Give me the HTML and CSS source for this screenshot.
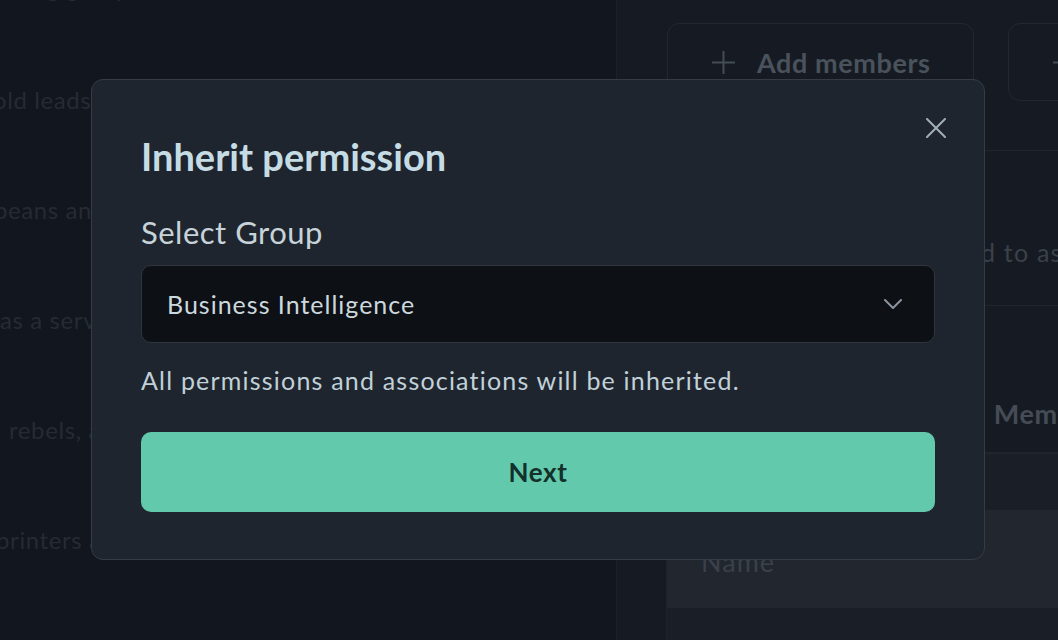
FILE: index.html
```html
<!DOCTYPE html>
<html lang="en">
<head>
<meta charset="utf-8">
<title>Inherit permission</title>
<link rel="stylesheet" href="styles.css">
</head>
<body>
<div class="app">
  <aside class="left-pane">
    <p class="bg-line top">big group of users that share the same access (roles)</p>
    <p class="bg-line l1">old leads on</p>
    <p class="bg-line l2">beans and</p>
    <p class="bg-line l3">as a service</p>
    <p class="bg-line l4">rebels, and</p>
    <p class="bg-line l5">printers and</p>
  </aside>
  <main class="right-pane">
    <div class="toolbar">
      <button class="ghost-btn wide">
        <svg class="plus" width="23" height="23" viewBox="0 0 23 23" fill="none" stroke="currentColor" stroke-width="2"><path d="M11.5 0V23M0 11.5H23"/></svg>
        Add members
      </button>
      <button class="ghost-btn">
        <svg class="plus" width="23" height="23" viewBox="0 0 23 23" fill="none" stroke="currentColor" stroke-width="2"><path d="M11.5 0V23M0 11.5H23"/></svg>
        Add roles
      </button>
    </div>
    <section class="panel">
      <div class="panel-row desc">
        <p>All members are granted to associated resources</p>
      </div>
      <div class="panel-row tabs">
        <span class="tab">Permissions</span>
        <span class="tab">Members</span>
      </div>
      <div class="table-head"></div>
      <div class="table-row"><span>Name</span></div>
      <div class="table-rest"></div>
    </section>
  </main>
</div>

<div class="overlay">
  <div class="modal" role="dialog" aria-labelledby="modal-title">
    <button class="close" aria-label="Close">
      <svg width="20" height="20" viewBox="0 0 20 20" fill="none" stroke="currentColor" stroke-width="2" stroke-linecap="round"><path d="M1 1L19 19M19 1L1 19"/></svg>
    </button>
    <h2 id="modal-title" class="modal-title">Inherit permission</h2>
    <label class="field-label" for="group">Select Group</label>
    <div class="select" id="group">
      <span>Business Intelligence</span>
      <svg class="chevron" width="18" height="10" viewBox="0 0 18 10" fill="none" stroke="currentColor" stroke-width="2" stroke-linecap="round" stroke-linejoin="round"><path d="M1 1L9 9L17 1"/></svg>
    </div>
    <p class="helper">All permissions and associations will be inherited.</p>
    <button class="primary">Next</button>
  </div>
</div>
</body>
</html>
```

FILE: styles.css
```css
* { box-sizing: border-box; }

html, body {
  margin: 0;
  padding: 0;
  width: 1058px;
  height: 640px;
  overflow: hidden;
  background: #12161e;
  font-family: "Lato", "Noto Sans", sans-serif;
}

.app {
  display: flex;
  height: 640px;
}

.left-pane {
  width: 617px;
  flex: none;
  border-right: 1px solid #1d222a;
  background: #12161e;
  overflow: hidden;
  display: flex;
  flex-direction: column;
}

.bg-line {
  margin: 0;
  height: 110px;
  line-height: 110px;
  font-size: 24px;
  letter-spacing: 0.6px;
  color: #262b33;
  white-space: nowrap;
  flex: none;
}
.bg-line.top { height: 57px; line-height: 0; margin-top: -12px; padding-left: 26px; }
.bg-line.l1 { text-indent: -7px; }
.bg-line.l2 { text-indent: -6px; }
.bg-line.l3 { text-indent: 0; }
.bg-line.l4 { text-indent: 9px; }
.bg-line.l5 { text-indent: -4px; }

.right-pane {
  flex: 1;
  background: #161b23;
  padding: 23px 0 0 50px;
  overflow: hidden;
  display: flex;
  flex-direction: column;
}

.toolbar {
  display: flex;
  gap: 34px;
  flex: none;
}

.ghost-btn {
  height: 78px;
  flex: none;
  display: flex;
  align-items: center;
  gap: 22px;
  padding: 0 40px 0 44px;
  background: transparent;
  border: 1px solid #222830;
  border-radius: 12px;
  color: #4a525c;
  font-family: inherit;
  font-size: 27px;
  letter-spacing: 0.6px;
  font-weight: 700;
  white-space: nowrap;
}
.ghost-btn.wide { width: 307px; }
.plus { flex: none; color: #444c56; }

.panel {
  margin-top: 49px;
  flex: 1;
  display: flex;
  flex-direction: column;
  border-left: 1px solid #1e232b;
  margin-left: -1px;
}

.panel-row {
  border-top: 1px solid #20252d;
  display: flex;
  padding-left: 34px;
  white-space: nowrap;
  flex: none;
}
.panel-row p { margin: 0; }

.desc {
  height: 155px;
  align-items: flex-end;
  padding-bottom: 38px;
  font-size: 25px;
  letter-spacing: 1.2px;
  color: #3b4149;
}

.tabs {
  height: 147px;
  align-items: flex-end;
  padding-bottom: 22px;
  gap: 143px;
  font-size: 27px;
  letter-spacing: 0.6px;
  font-weight: 700;
  color: #454c55;
}

.table-head {
  border-top: 2px solid #20252d;
  height: 58px;
  background: #1a1f27;
  flex: none;
}

.table-row {
  height: 98px;
  background: #21262f;
  display: flex;
  align-items: center;
  padding-left: 34px;
  padding-top: 4px;
  font-size: 27px;
  letter-spacing: 1px;
  color: #3a414a;
  flex: none;
}

.table-rest {
  flex: 1;
  background: #1a1f27;
}

/* Modal */
.overlay {
  position: fixed;
  inset: 0;
}

.modal {
  position: absolute;
  left: 91px;
  top: 79px;
  width: 894px;
  height: 481px;
  background: #1f252e;
  border: 1px solid #353c46;
  border-radius: 12px;
  padding: 53px 49px 0;
  display: flex;
  flex-direction: column;
}

.close {
  position: absolute;
  top: 38px;
  right: 38px;
  width: 20px;
  height: 20px;
  padding: 0;
  border: 0;
  background: none;
  color: #a3aeb6;
  display: flex;
}

.modal-title {
  margin: 0;
  font-size: 38px;
  line-height: 46px;
  font-weight: 700;
  color: #c5dce5;
}

.field-label {
  margin-top: 35px;
  font-size: 31px;
  line-height: 36px;
  letter-spacing: 0.5px;
  color: #c6d4da;
}

.select {
  margin-top: 15px;
  height: 78px;
  flex: none;
  display: flex;
  align-items: center;
  justify-content: space-between;
  padding: 0 32px 0 25px;
  background: #0d1015;
  border: 1px solid #2e353e;
  border-radius: 10px;
  font-size: 25px;
  letter-spacing: 1px;
  color: #cbd9df;
}
.chevron { color: #8b949d; }

.helper {
  margin: 22px 0 0;
  font-size: 25px;
  line-height: 30px;
  letter-spacing: 1.2px;
  color: #c0d1d9;
}

.primary {
  margin-top: 37px;
  height: 80px;
  flex: none;
  border: 0;
  border-radius: 10px;
  background: #63c9ad;
  color: #13302a;
  font-family: inherit;
  font-size: 26px;
  letter-spacing: 0.6px;
  font-weight: 700;
}
```
